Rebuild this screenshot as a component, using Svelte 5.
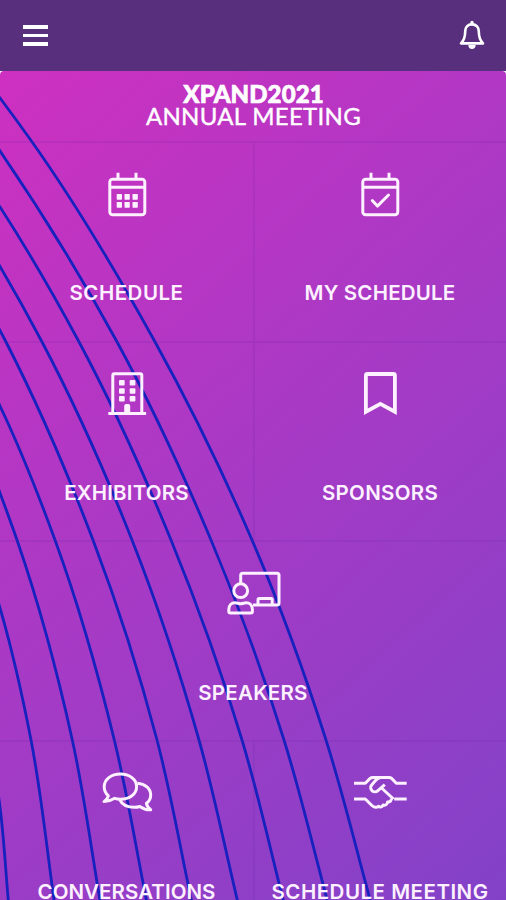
<script lang="ts">
	type Point = [number, number];
	type IconName = 'calendar' | 'check' | 'building' | 'bookmark' | 'speaker' | 'chat' | 'handshake';

	interface Tile {
		label: string;
		icon: IconName;
		tracking: number;
		wide?: boolean;
	}

	const tiles: Tile[] = [
		{ label: 'SCHEDULE', icon: 'calendar', tracking: 0.5 },
		{ label: 'MY SCHEDULE', icon: 'check', tracking: 0.2 },
		{ label: 'EXHIBITORS', icon: 'building', tracking: 0.2 },
		{ label: 'SPONSORS', icon: 'bookmark', tracking: 0.3 },
		{ label: 'SPEAKERS', icon: 'speaker', tracking: 0.25, wide: true },
		{ label: 'CONVERSATIONS', icon: 'chat', tracking: 0.05 },
		{ label: 'SCHEDULE MEETING', icon: 'handshake', tracking: 0.5 }
	];

	// Background arcs, in screen coordinates
	const arcs: Point[][] = [
		[[-30, 59], [0, 98], [30.7, 140], [154, 340], [252, 540], [326, 740], [371, 903]],
		[[-30, 108], [0, 151], [116, 340], [211, 540], [284, 740], [328, 903]],
		[[-30, 162], [0, 207], [78, 340], [171, 540], [242, 740], [284, 903]],
		[[-30, 217], [0, 266.5], [41, 340], [132, 540], [199, 740], [238, 903]],
		[[-30, 275], [5, 340], [93, 540], [157, 740], [192, 903]],
		[[-30, 347], [0, 406], [55, 540], [114.3, 740], [147, 903]],
		[[-30, 415], [0, 493], [17, 540], [72.3, 740], [100.5, 903]],
		[[-25, 530], [0, 608], [31, 740], [54.5, 903]],
		[[-18, 700], [0, 807], [8.5, 903]]
	];

	// Smooth curve through the points, x as a function of y.
	// Tangents are weighted by interval since the spacing is uneven.
	function smooth(points: Point[]) {
		const slope = (i: number) => (points[i + 1][0] - points[i][0]) / (points[i + 1][1] - points[i][1]);
		const last = points.length - 1;
		const tangents = points.map((p, i) => {
			if (i === 0) return slope(0);
			if (i === last) return slope(last - 1);
			const before = p[1] - points[i - 1][1];
			const after = points[i + 1][1] - p[1];
			return (slope(i - 1) * after + slope(i) * before) / (before + after);
		});

		let d = `M${points[0][0]} ${points[0][1]}`;
		for (let i = 0; i < last; i++) {
			const [x0, y0] = points[i];
			const [x1, y1] = points[i + 1];
			const h = (y1 - y0) / 3;
			d += ` C${x0 + tangents[i] * h} ${y0 + h} ${x1 - tangents[i + 1] * h} ${y1 - h} ${x1} ${y1}`;
		}
		return d;
	}
</script>

<div class="app">
	<header class="topbar">
		<button class="menu" aria-label="Menu">
			<span></span>
			<span></span>
			<span></span>
		</button>
		<button class="bell" aria-label="Notifications">
			<svg width="28" height="32" viewBox="0 0 28 32">
				<path class="fill" d="M10.3 25h7.4c0 2.6-1.6 4-3.7 4s-3.7-1.4-3.7-4z" />
				<path class="fill" d="M12.3 5V2.5a1.7 1.7 0 0 1 3.4 0V5z" />
				<path class="line" d="M14 4.4c-4.4 0-6.8 3-6.8 7.2 0 5.800-1.200 8.900-4.200 11.800h22c-3-2.900-4.200-6-4.200-11.800 0-4.200-2.400-7.200-6.800-7.200z" />
			</svg>
		</button>
	</header>

	<main class="content">
		<svg class="arcs" width="506" height="829" viewBox="0 71 506 829">
			{#each arcs as arc}
				<path d={smooth(arc)} />
			{/each}
		</svg>

		<h1 class="title">
			<strong>XPAND2021</strong>
			<span>ANNUAL MEETING</span>
		</h1>

		<nav class="grid">
			{#each tiles as tile}
				<div class="tile" class:wide={tile.wide}>
					<svg class="icon" width="56" height="48" viewBox="0 0 56 48">
						{#if tile.icon === 'calendar' || tile.icon === 'check'}
							<rect x="10.8" y="9.2" width="35" height="35.6" rx="2.8" />
							<path d="M10.8 17.3h35M19 9V2.7M37 9V2.7" />
							{#if tile.icon === 'calendar'}
								{#each [24, 32] as y}
									{#each [17.7, 25.5, 33.5] as x}
										<rect class="dot" {x} {y} width="5.3" height="5.7" rx="0.6" />
									{/each}
								{/each}
							{:else}
								<path class="round" d="M20.3 30.5l5.1 5.6L36.5 25" />
							{/if}
						{:else if tile.icon === 'building'}
							<path d="M13.8 43V5.3q0-1.5 1.5-1.5h26q1.5 0 1.5 1.5V43M9.3 43.5h37.8" />
							{#each [10, 18.2, 26] as y}
								{#each [20, 30.7] as x}
									<rect class="dot" {x} {y} width="5.7" height="5.6" rx="1" />
								{/each}
							{/each}
							<path class="dot" d="M25.2 44v-8q0-2 2-2h2q2 0 2 2v8z" />
						{:else if tile.icon === 'bookmark'}
							<path class="thick" d="M13.9 41.7V5.5q0-1.5 1.5-1.5h26q1.5 0 1.5 1.5v36.2L28.4 33.9z" />
						{:else if tile.icon === 'speaker'}
							<path d="M15.7 13V5.3q0-2 2-2H52q2 0 2 2V33q0 2-2 2H28" />
							<path d="M33 35v-5.3q0-1.2 1.2-1.2H46q1.2 0 1.2 1.2V35" />
							<circle cx="15.7" cy="20.7" r="6.9" />
							<path d="M3.8 41.5V39.5c0-4 2.700-6.800 6.300-6.800 2.200 0 3.200 1 5.500 1s3.300-1 5.500-1c3.600 0 6.300 2.800 6.300 6.800v2q0 1.500-1.500 1.500H5.300q-1.500 0-1.500-1.500z" />
						{:else if tile.icon === 'chat'}
							<path class="thin" d="M9.3 26.7C6.7 24.4 5.2 21.3 5.2 17.7 5.2 10.3 12.3 5 21.4 5s16.2 5.3 16.2 12.7S30.5 30.2 21.4 30.2c-2.1 0-4-.3-5.7-.9-2.7 1.7-6 3.3-10.7 3.3 2.3-1.7 3.9-3.6 4.3-5.9z" />
							<path class="thin" d="M38.3 14.2c7.8.6 13.4 5.4 13.4 11.7 0 3.6-1.7 6.5-4.3 8.4.4 2.7 2 4.7 4.3 6.5-4.3.3-7.9-1.2-10.9-3.3-1.6.5-3.5.8-5.3.8-7.2 0-12.3-2.5-14.7-7.5" />
						{:else}
							<path class="thin" d="M2 14.2h11.3l4.800-4.800q1.100-1 2.600-1H37q1.500 0 2.600 1l4.700 4.800h10.400" />
							<path class="thin" d="M2 30h11.3l6.600 6.500c2.300 2.200 5 2.400 6.500.7 1.800 1.400 4.200.7 4.700-1.200 2.100.8 4.600-.8 4.400-3 2.600.2 4.200-1.300 3.800-3.500M42.200 30h12.500" />
							<path class="thin" d="M28.5 8.5c-3 .5-4.300 2-5.500 3.500l-3.500 4.200c-1.300 1.700-1 4.200.6 5.600 1.700 1.500 4.200 1.400 5.800-.2l6.900-6M29 18.500L41.500 30" />
						{/if}
					</svg>
					<span class="label" style="letter-spacing: {tile.tracking}px">{tile.label}</span>
				</div>
			{/each}
		</nav>
	</main>
</div>

<style>
	:global(body) {
		margin: 0;
		background: #fff;
	}

	.app {
		display: flex;
		flex-direction: column;
		width: 506px;
		height: 900px;
		overflow: hidden;
		background: #fff;
		color: #fff;
	}

	.topbar {
		display: flex;
		align-items: center;
		justify-content: space-between;
		flex: none;
		height: 71px;
		padding: 0 20px 0 23px;
		box-sizing: border-box;
		background: #572f7c;
	}

	button {
		padding: 0;
		border: 0;
		background: none;
	}

	.menu {
		display: flex;
		flex-direction: column;
		gap: 5px;
		width: 25px;
	}

	.menu span {
		height: 3.7px;
		background: #fff;
	}

	.bell svg {
		display: block;
	}

	.bell .fill {
		fill: #fff;
	}

	.bell .line {
		fill: #572f7c;
		stroke: #fff;
		stroke-width: 2.6;
		stroke-linejoin: round;
	}

	.content {
		position: relative;
		flex: 1;
		min-height: 0;
		overflow: hidden;
		border-radius: 4px 4px 0 0;
		background: linear-gradient(138deg, #ce30c0 0%, #ab39c5 43%, #8242c8 100%);
	}

	.arcs {
		position: absolute;
		top: 0;
		left: 0;
		fill: none;
		stroke: #1721be;
		stroke-width: 2.8;
	}

	.title {
		position: relative;
		display: flex;
		flex-direction: column;
		align-items: center;
		height: 70px;
		margin: 0;
		padding: 12px 0 0 1px;
		box-sizing: border-box;
		font: 400 24px/22px Lato, sans-serif;
		letter-spacing: 0.3px;
		-webkit-text-stroke: 0.4px #fff;
	}

	.title strong {
		font-weight: 900;
		letter-spacing: 0.1px;
		-webkit-text-stroke-width: 0.7px;
	}

	.grid {
		position: relative;
		display: grid;
		grid-template-columns: 1fr 1fr;
		grid-auto-rows: 199.6px;
	}

	.tile {
		display: flex;
		flex-direction: column;
		align-items: center;
		padding-top: 29.4px;
		box-sizing: border-box;
		box-shadow: inset 0 2px rgba(90, 30, 160, 0.13);
	}

	.tile:nth-child(2),
	.tile:nth-child(4),
	.tile:last-child {
		padding-left: 1px;
		box-shadow: inset 2px 2px rgba(90, 30, 160, 0.13);
	}

	.wide {
		grid-column: 1 / -1;
	}

	.icon {
		fill: none;
		stroke: #fdf0ff;
		stroke-width: 3;
	}

	.icon .dot {
		fill: #fdf0ff;
		stroke: none;
	}

	.icon .round {
		stroke-linecap: round;
		stroke-linejoin: round;
	}

	.icon .thick {
		stroke-width: 3.8;
	}

	.icon .thin {
		stroke-width: 3;
		stroke-linejoin: round;
	}

	.label {
		margin-top: 63px;
		font: 600 20.5px/24px Inter, sans-serif;
		color: #fdf0ff;
		white-space: nowrap;
	}
</style>
